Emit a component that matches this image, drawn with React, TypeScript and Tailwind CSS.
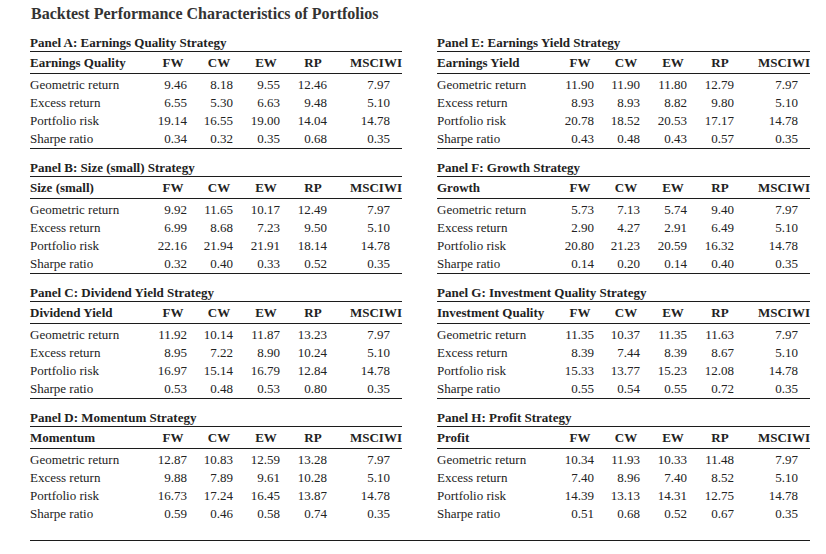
const COLS = ["FW", "CW", "EW", "RP"] as const;

const ROW_LABELS = ["Geometric return", "Excess return", "Portfolio risk", "Sharpe ratio"];

type Panel = {
	title: string;
	label: string;
	rows: string[][];
};

const LEFT: Panel[] = [
	{
		title: "Panel A: Earnings Quality Strategy",
		label: "Earnings Quality",
		rows: [
			["9.46", "8.18", "9.55", "12.46", "7.97"],
			["6.55", "5.30", "6.63", "9.48", "5.10"],
			["19.14", "16.55", "19.00", "14.04", "14.78"],
			["0.34", "0.32", "0.35", "0.68", "0.35"],
		],
	},
	{
		title: "Panel B: Size (small) Strategy",
		label: "Size (small)",
		rows: [
			["9.92", "11.65", "10.17", "12.49", "7.97"],
			["6.99", "8.68", "7.23", "9.50", "5.10"],
			["22.16", "21.94", "21.91", "18.14", "14.78"],
			["0.32", "0.40", "0.33", "0.52", "0.35"],
		],
	},
	{
		title: "Panel C: Dividend Yield Strategy",
		label: "Dividend Yield",
		rows: [
			["11.92", "10.14", "11.87", "13.23", "7.97"],
			["8.95", "7.22", "8.90", "10.24", "5.10"],
			["16.97", "15.14", "16.79", "12.84", "14.78"],
			["0.53", "0.48", "0.53", "0.80", "0.35"],
		],
	},
	{
		title: "Panel D: Momentum Strategy",
		label: "Momentum",
		rows: [
			["12.87", "10.83", "12.59", "13.28", "7.97"],
			["9.88", "7.89", "9.61", "10.28", "5.10"],
			["16.73", "17.24", "16.45", "13.87", "14.78"],
			["0.59", "0.46", "0.58", "0.74", "0.35"],
		],
	},
];

const RIGHT: Panel[] = [
	{
		title: "Panel E: Earnings Yield Strategy",
		label: "Earnings Yield",
		rows: [
			["11.90", "11.90", "11.80", "12.79", "7.97"],
			["8.93", "8.93", "8.82", "9.80", "5.10"],
			["20.78", "18.52", "20.53", "17.17", "14.78"],
			["0.43", "0.48", "0.43", "0.57", "0.35"],
		],
	},
	{
		title: "Panel F: Growth Strategy",
		label: "Growth",
		rows: [
			["5.73", "7.13", "5.74", "9.40", "7.97"],
			["2.90", "4.27", "2.91", "6.49", "5.10"],
			["20.80", "21.23", "20.59", "16.32", "14.78"],
			["0.14", "0.20", "0.14", "0.40", "0.35"],
		],
	},
	{
		title: "Panel G: Investment Quality Strategy",
		label: "Investment Quality",
		rows: [
			["11.35", "10.37", "11.35", "11.63", "7.97"],
			["8.39", "7.44", "8.39", "8.67", "5.10"],
			["15.33", "13.77", "15.23", "12.08", "14.78"],
			["0.55", "0.54", "0.55", "0.72", "0.35"],
		],
	},
	{
		title: "Panel H: Profit Strategy",
		label: "Profit",
		rows: [
			["10.34", "11.93", "10.33", "11.48", "7.97"],
			["7.40", "8.96", "7.40", "8.52", "5.10"],
			["14.39", "13.13", "14.31", "12.75", "14.78"],
			["0.51", "0.68", "0.52", "0.67", "0.35"],
		],
	},
];

const GRID = "grid grid-cols-[111px_46px_46px_47px_47px_1fr] items-center";

function PanelTable({ panel, last }: { panel: Panel; last?: boolean }) {
	return (
		<div className="flex flex-col">
			<div className="h-4 flex items-center text-[13px] font-bold whitespace-nowrap">
				{panel.title}
			</div>
			<div className="h-px bg-[#1c1c1c]" />
			<div className={`${GRID} h-[21px] text-[13px] font-bold`}>
				<span className="whitespace-nowrap">{panel.label}</span>
				{COLS.map((c) => (
					<span key={c} className="flex justify-end">
						<span className="w-[28px] text-center">{c}</span>
					</span>
				))}
				<span className="text-right">MSCIWI</span>
			</div>
			<div className="h-px bg-[#1c1c1c]" />
			<div className="flex flex-col py-px">
				{panel.rows.map((r, i) => (
					<div key={ROW_LABELS[i]} className={`${GRID} h-[18px] text-[13px]`}>
						<span className="whitespace-nowrap">{ROW_LABELS[i]}</span>
						{r.slice(0, 4).map((v, j) => (
							<span key={j} className="text-right">
								{v}
							</span>
						))}
						<span className="text-right pr-[12px]">{r[4]}</span>
					</div>
				))}
			</div>
			{!last && <div className="h-px bg-[#1c1c1c]" />}
		</div>
	);
}

export default function App() {
	return (
		<div className="w-[826px] h-[554px] bg-white pt-[4px] pl-[30px] text-[#222] font-['Liberation_Serif',serif]">
			<h1 className="h-5 flex items-center text-[16px] font-bold text-[#333] pl-px">
				Backtest Performance Characteristics of Portfolios
			</h1>
			<div className="mt-[11px] grid grid-cols-[372px_373px] gap-x-[35px]">
				{[LEFT, RIGHT].map((col, ci) => (
					<div key={ci} className="flex flex-col gap-[11px]">
						{col.map((p, i) => (
							<PanelTable key={p.title} panel={p} last={i === col.length - 1} />
						))}
					</div>
				))}
			</div>
			<div className="mt-[17px] w-[780px] h-px bg-[#1c1c1c]" />
		</div>
	);
}
